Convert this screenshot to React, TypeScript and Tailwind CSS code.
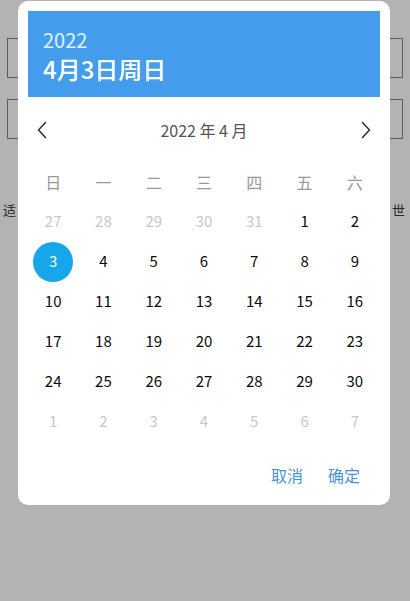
import React from 'react';

const WEEK = ['日', '一', '二', '三', '四', '五', '六'];

type Day = { n: number; cur: boolean };

const buildDays = (): Day[] => {
  const days: Day[] = [];
  [27, 28, 29, 30, 31].forEach((n) => days.push({ n, cur: false }));
  for (let i = 1; i <= 30; i++) days.push({ n: i, cur: true });
  for (let i = 1; i <= 7; i++) days.push({ n: i, cur: false });
  return days;
};

const Chevron = ({ dir }: { dir: 'left' | 'right' }) => (
  <svg width="12" height="18" viewBox="0 0 12 18" fill="none">
    <path
      d={dir === 'left' ? 'M9.5 1.5L2.5 9l7 7.5' : 'M2.5 1.5L9.5 9l-7 7.5'}
      stroke="#333"
      strokeWidth="1.6"
      strokeLinecap="round"
      strokeLinejoin="round"
    />
  </svg>
);

const App: React.FC = () => {
  const days = buildDays();

  return (
    <div
      className="relative w-[410px] h-[601px] overflow-hidden bg-[#b3b3b3]"
      style={{ fontFamily: '"Noto Sans CJK SC", "Noto Sans", sans-serif' }}
    >
      {/* page behind the dialog */}
      <div className="flex flex-col px-[7px] pt-[38px] gap-[21px] text-[#262626]">
        <div className="h-[40px] border border-[#5c5c5c]" />
        <div className="h-[40px] border border-[#5c5c5c]" />
        <div className="mt-[40px] flex justify-between text-[13px] leading-[20px] -mx-[4px] pr-[2px]">
          <span>适</span>
          <span>世</span>
        </div>
      </div>

      {/* dialog */}
      <div className="absolute left-[18px] top-[1px] w-[372px] h-[504px] rounded-[10px] bg-white p-[10px] flex flex-col">
        <div className="h-[87px] bg-[#449dec] px-[15px] pt-[17px] text-white">
          <div className="text-[20px] leading-[24px] text-white/85">2022</div>
          <div className="mt-[3px] text-[24px] leading-[28px] font-medium">4月3日周日</div>
        </div>

        <div className="h-[66px] flex items-center justify-between px-[4px] pt-[2px]">
          <button className="w-[20px] h-[30px] flex items-center justify-center">
            <Chevron dir="left" />
          </button>
          <span className="text-[16px] text-[#555]">2022 年 4 月</span>
          <button className="w-[20px] h-[30px] flex items-center justify-center">
            <Chevron dir="right" />
          </button>
        </div>

        <div className="grid grid-cols-7">
          {WEEK.map((w) => (
            <div key={w} className="h-[40px] flex items-center justify-center text-[16px] text-[#999]">
              {w}
            </div>
          ))}
          {days.map((d, i) => {
            const selected = d.cur && d.n === 3;
            return (
              <div key={i} className="h-[40px] flex items-center justify-center">
                <span
                  className={
                    selected
                      ? 'w-[40px] h-[40px] rounded-full bg-[#17a6e9] text-white flex items-center justify-center text-[15px]'
                      : d.cur
                        ? 'text-[15px] text-[#0a0a0a]'
                        : 'text-[15px] text-[#c8c8c8]'
                  }
                >
                  {d.n}
                </span>
              </div>
            );
          })}
        </div>

        <div className="mt-[14px] h-[40px] flex items-center justify-end gap-[25px] pr-[20px] text-[16px] text-[#4a90d9]">
          <button>取消</button>
          <button>确定</button>
        </div>
      </div>
    </div>
  );
};

export default App;
